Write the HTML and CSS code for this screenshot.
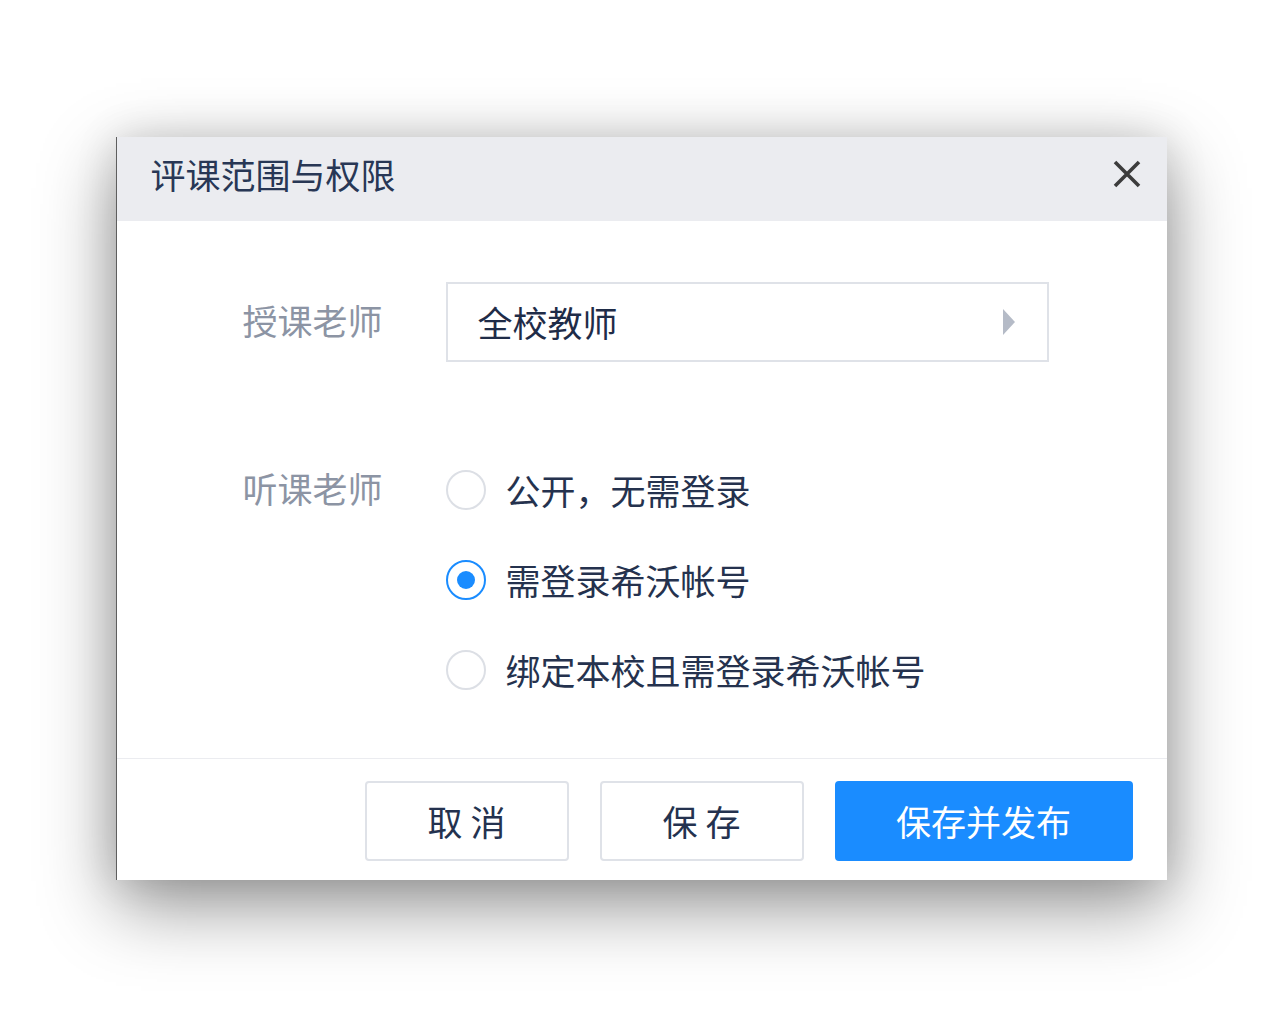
FILE: index.html
```html
<!DOCTYPE html>
<html lang="zh-CN">
<head>
    <meta charset="UTF-8">
    <meta name="viewport" content="width=device-width, initial-scale=1.0">
    <title>评课范围与权限</title>
    <link rel="stylesheet" href="styles.css">
</head>

<body>
    <div class="dialog">
        <div class="dialog-header">
            <h2 class="dialog-title">评课范围与权限</h2>
            <button class="close-btn" type="button" aria-label="关闭">
                <svg width="28" height="28" viewBox="0 0 28 28">
                    <path d="M2 2 L26 26 M26 2 L2 26" stroke="#3c3c3c" stroke-width="3.6" stroke-linecap="butt" fill="none"/>
                </svg>
            </button>
        </div>

        <div class="dialog-body">
            <div class="form-row">
                <span class="form-label">授课老师</span>
                <div class="select-box">
                    <span>全校教师</span>
                    <i class="caret"></i>
                </div>
            </div>

            <div class="form-row form-row-top">
                <span class="form-label">听课老师</span>
                <ul class="radio-list">
                    <li class="radio-item">
                        <span class="radio"></span>
                        <span>公开，无需登录</span>
                    </li>
                    <li class="radio-item">
                        <span class="radio checked"></span>
                        <span>需登录希沃帐号</span>
                    </li>
                    <li class="radio-item">
                        <span class="radio"></span>
                        <span>绑定本校且需登录希沃帐号</span>
                    </li>
                </ul>
            </div>
        </div>

        <div class="dialog-footer">
            <button class="btn" type="button">取 消</button>
            <button class="btn" type="button">保 存</button>
            <button class="btn btn-primary" type="button">保存并发布</button>
        </div>
    </div>
</body>

</html>
```

FILE: styles.css
```css
* {
    box-sizing: border-box;
}

body {
    margin: 0;
    padding-left: 2px;
    height: 100vh;
    background-color: #fff;
    font-family: "Noto Sans CJK SC", "Noto Sans", sans-serif;
    display: flex;
    align-items: center;
    justify-content: center;
}

/* dialog shell */
.dialog {
    width: 1051px;
    background-color: #fff;
    border-left: 1px solid #5e5e5e;
    box-shadow: 0 26px 70px rgba(0, 0, 0, 0.42), 0 0 40px rgba(0, 0, 0, 0.12);
}

.dialog-header {
    height: 84px;
    background-color: #ebecf0;
    display: flex;
    align-items: center;
    justify-content: space-between;
    padding: 0 26px 10px 34px;
}

.dialog-title {
    margin: 0;
    font-size: 35px;
    font-weight: normal;
    color: #283755;
    line-height: 1;
}

.close-btn {
    border: none;
    background: none;
    padding: 0;
    width: 28px;
    height: 28px;
    cursor: pointer;
    display: flex;
}

/* form */
.dialog-body {
    padding: 61px 0 68px 126px;
    display: flex;
    flex-direction: column;
    gap: 108px;
}

.form-row {
    display: flex;
    align-items: center;
    gap: 62px;
}

.form-row-top {
    align-items: flex-start;
}

.form-label {
    width: 141px;
    font-size: 35px;
    color: #8c94a4;
    line-height: 40px;
    white-space: nowrap;
    position: relative;
    top: -2px;
}

.select-box {
    width: 603px;
    height: 80px;
    border: 2px solid #dfe2e8;
    padding: 0 32px 0 30px;
    display: flex;
    align-items: center;
    justify-content: space-between;
    font-size: 35px;
    color: #1f2c48;
}

.caret {
    width: 0;
    height: 0;
    border-left: 12px solid #b5bbc7;
    border-top: 13px solid transparent;
    border-bottom: 13px solid transparent;
}

.radio-list {
    list-style: none;
    margin: 0;
    padding: 0;
    display: flex;
    flex-direction: column;
    gap: 50px;
}

.radio-item {
    display: flex;
    align-items: center;
    gap: 20px;
    height: 40px;
    font-size: 35px;
    color: #25324e;
}

.radio {
    width: 40px;
    height: 40px;
    border: 2px solid #dcdfe5;
    border-radius: 50%;
    display: flex;
    align-items: center;
    justify-content: center;
}

.radio.checked {
    border-color: #1a8cff;
}

.radio.checked::after {
    content: "";
    width: 18px;
    height: 18px;
    border-radius: 50%;
    background-color: #1a8cff;
}

/* footer */
.dialog-footer {
    border-top: 1px solid #ebecf0;
    padding: 22px 34px 19px 0;
    display: flex;
    justify-content: flex-end;
    gap: 31px;
}

.btn {
    width: 204px;
    height: 80px;
    border: 2px solid #dfe2e8;
    border-radius: 4px;
    background-color: #fff;
    color: #24324f;
    font-family: inherit;
    font-size: 35px;
    padding: 0;
    cursor: pointer;
}

.btn-primary {
    width: 298px;
    border-color: #1a8cff;
    background-color: #1a8cff;
    color: #fff;
}
```
